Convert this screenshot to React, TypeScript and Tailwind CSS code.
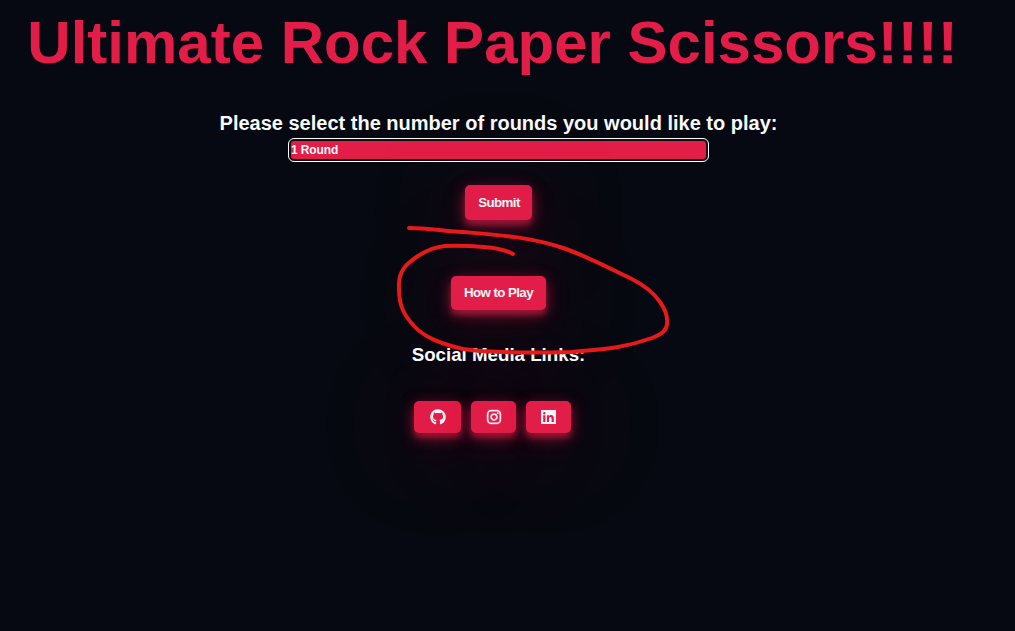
import type { ReactNode } from "react";
import { FaGithub, FaInstagram } from "react-icons/fa";

const glow =
  "rounded-[5px] bg-[#e11d48] text-[#f1f5f9] shadow-[0_5px_5px_rgba(225,29,72,0.4),0_4px_14px_rgba(225,29,72,0.5),0_8px_28px_rgba(225,29,72,0.14),0_8px_110px_rgba(225,29,72,0.3)]";

function LinkedInIcon() {
  return (
    <svg width="15" height="14" viewBox="0 0 15 14" fill="currentColor">
      <path fillRule="evenodd" d="M0 0H15V14H0ZM2.2 5.3V12H4.4V5.3ZM3.3 2A1.2 1.2 0 1 0 3.3 4.4A1.2 1.2 0 1 0 3.3 2ZM5.9 5.3V12H8V8.6C8 7.4 8.5 6.9 9.4 6.9S10.6 7.5 10.6 8.7V12H12.8V8.2C12.8 6 11.8 5.1 10.1 5.1C9.1 5.1 8.4 5.6 8 6.2V5.3Z" />
    </svg>
  );
}

function SocialLink({ label, width, children }: { label: string; width: string; children: ReactNode }) {
  return (
    <a href="#" aria-label={label} className={`flex h-8 items-center justify-center text-base ${width} ${glow}`}>
      {children}
    </a>
  );
}

export default function App() {
  return (
    <main className="relative h-[631px] w-[1015px] overflow-hidden bg-[#060911] font-['Liberation_Sans',Arial,sans-serif] font-bold text-[#f8fafc]">
      <div className="flex w-[997px] flex-col items-center">
        <h1 className="mt-[9px] mr-3 text-[60px] leading-[67px] whitespace-nowrap text-[#e11d48]">
          Ultimate Rock Paper Scissors!!!!
        </h1>
        <label htmlFor="rounds" className="mt-[35px] text-[20px] leading-6">
          Please select the number of rounds you would like to play:
        </label>
        <div className="mt-[3px] flex h-6 w-[421px] rounded-[6px] border border-white bg-[#101014] p-[2px]">
          <button id="rounds" className="flex h-[18px] w-full items-center rounded-[3px] bg-[#e11d48] text-[12px] tracking-[-0.1px]">
            1 Round
          </button>
        </div>
        <button className={`mt-[23px] h-[35px] w-[67px] pl-px text-[13.333px] tracking-[-0.6px] ${glow}`}>Submit</button>
        <button className={`mt-14 h-[34px] w-[95px] text-[13.333px] tracking-[-0.6px] ${glow}`}>How to Play</button>
        <h2 className="relative mt-[33px] text-[18.72px] leading-6">Social Media Links:</h2>
        <nav className="mt-[34px] mr-3 flex gap-[10px]">
          <SocialLink label="GitHub" width="w-[47px]"><FaGithub /></SocialLink>
          <SocialLink label="Instagram" width="w-[45px]"><FaInstagram stroke="currentColor" strokeWidth="14" /></SocialLink>
          <SocialLink label="LinkedIn" width="w-[45px]"><LinkedInIcon /></SocialLink>
        </nav>
      </div>
      <svg className="pointer-events-none absolute inset-0" width="1015" height="631" fill="none" stroke="#e81919" strokeWidth="4" strokeLinecap="round" strokeLinejoin="round">
        <path d="M409 228C427 228 445 231 463 232C499 235 532 237 566 249C588 257 609 268 630 278C642 284 654 293 660 302C665 309 668 316 667 324C667 331 660 335 652 338C624 348 605 349 571 352C535 353 491 353 463 349C442 344 425 338 414 326C403 314 399 305 399 288C398 271 406 264 418 256C427 250 435 247 445 246C461 245 473 246 484 247C498 248 506 250 513 254" />
      </svg>
    </main>
  );
}
